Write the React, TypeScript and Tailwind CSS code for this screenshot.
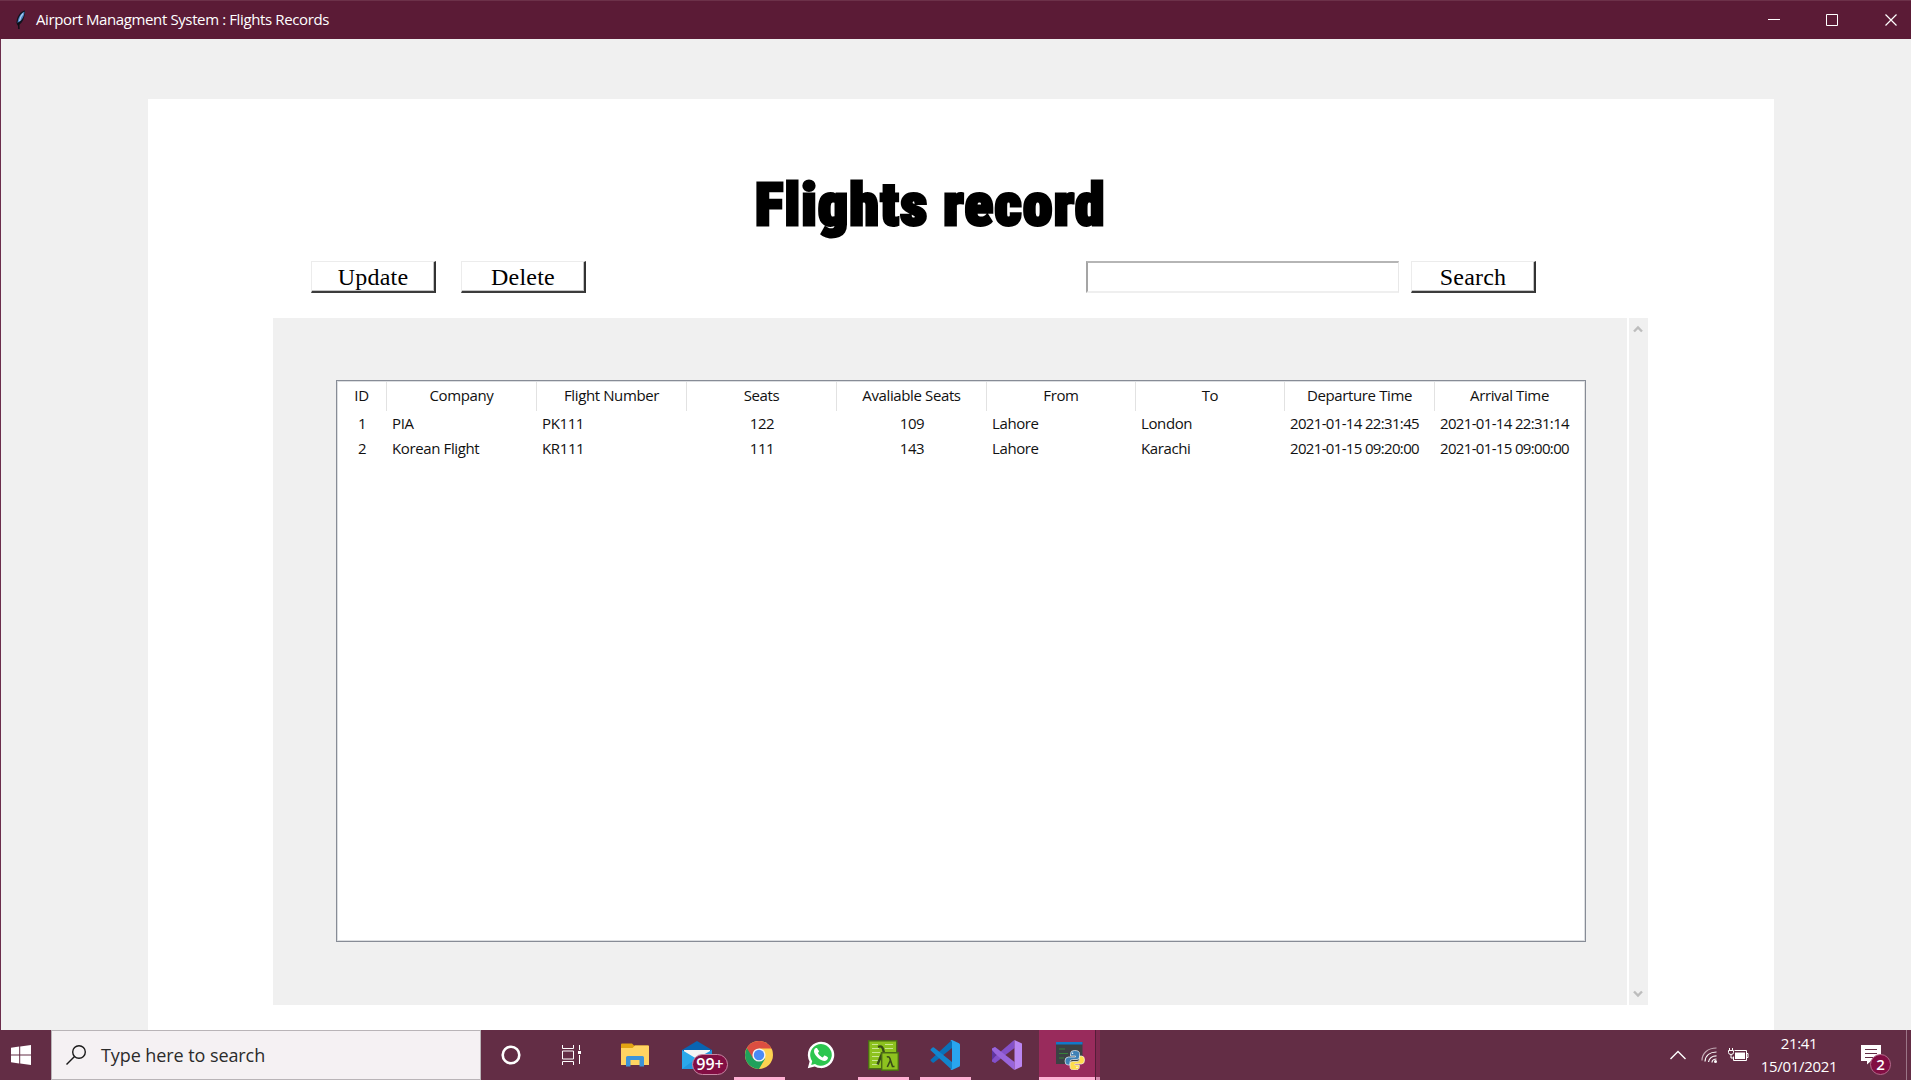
import React from "react";

type Align = "left" | "center";
type Column = { title: string; width: string; align: Align };

const columns: Column[] = [
  { title: "ID", width: "w-[50px]", align: "center" },
  { title: "Company", width: "w-[150px]", align: "left" },
  { title: "Flight Number", width: "w-[150px]", align: "left" },
  { title: "Seats", width: "w-[150px]", align: "center" },
  { title: "Avaliable Seats", width: "w-[150px]", align: "center" },
  { title: "From", width: "w-[149px]", align: "left" },
  { title: "To", width: "w-[149px]", align: "left" },
  { title: "Departure Time", width: "w-[150px]", align: "left" },
  { title: "Arrival Time", width: "w-[150px]", align: "left" },
];

const rows: string[][] = [
  ["1", "PIA", "PK111", "122", "109", "Lahore", "London", "2021-01-14 22:31:45", "2021-01-14 22:31:14"],
  ["2", "Korean Flight", "KR111", "111", "143", "Lahore", "Karachi", "2021-01-15 09:20:00", "2021-01-15 09:00:00"],
];

function TitleBar() {
  return (
    <header className="flex h-[39px] items-center border-t border-[#6c3149] bg-[#5b1b36] text-white">
      <svg className="ml-[14px] h-5 w-3" viewBox="0 0 12 20">
        <path d="M11 .5C6 1.500 2.500 7 2.500 13l1 2.500c4-1 7.500-7 7.500-15z" fill="#10131c" />
        <path d="M10.500 1.500C7 3 4 7.500 3.500 13c3.500-1.500 6.800-6 7-11.500z" fill="#4d84c4" />
        <path d="M9 3.500C7.500 5 6 8 5.500 11" stroke="#a9cdf0" strokeWidth="1.300" fill="none" />
        <path d="M4.600 12.500L4.900 19" stroke="#0c0e15" strokeWidth="1.400" fill="none" />
      </svg>
      <h1 className="ml-[10px] pb-[2px] whitespace-nowrap font-['Open_Sans',sans-serif] text-[15px] tracking-[-0.38px]">
        Airport Managment System : Flights Records
      </h1>
      <svg className="mr-[13px] ml-auto h-3 w-[130px]" viewBox="0 0 130 12" fill="none" stroke="#fff">
        <path d="M0 5.500h12" />
        <path d="M58.500 .5h11v11h-11z" />
        <path d="M117.500 .5l11 11M128.500 .5l-11 11" strokeWidth="1.200" />
      </svg>
    </header>
  );
}

function RaisedButton({ label }: { label: string }) {
  return (
    <button className="flex h-8 w-[125px] items-center justify-center border-t border-r-2 border-b-2 border-l border-t-[#ececec] border-r-[#333] border-b-[#3c3c3c] border-l-[#ececec] bg-white font-['Liberation_Serif',serif] text-2xl leading-none tracking-[0.2px] text-black shadow-[inset_-1px_-1px_0_#c4c4c4]">
      {label}
    </button>
  );
}

function FlightsTable() {
  return (
    <div className="h-[562px] w-[1250px] border border-[#878c96] bg-white font-['Open_Sans',sans-serif] text-[15px] text-[#111] shadow-[inset_0_0_0_1px_#dcdee1]">
      <div className="flex h-[30px] pt-px">
        {columns.map((c) => (
          <div key={c.title} className={`${c.width} flex items-center justify-center border-r border-[#e2e2e2] pb-[2px] tracking-[-0.38px] whitespace-nowrap`}>
            {c.title}
          </div>
        ))}
      </div>
      {rows.map((row) => (
        <div key={row[0]} className="flex h-[25px]">
          {row.map((cell, i) => (
            <div
              key={columns[i].title}
              className={`${columns[i].width} flex items-center whitespace-nowrap ${
                columns[i].align === "center" ? "justify-center" : "pl-[5px]"
              } ${i > 6 ? "tracking-[-0.66px]" : "tracking-[-0.38px]"}`}
            >
              {cell}
            </div>
          ))}
        </div>
      ))}
    </div>
  );
}

function ScrollBar() {
  return (
    <div className="flex w-[21px] flex-col items-center justify-between border-l-2 border-white bg-[#f0f0f0] py-[7px] pr-[2px]">
      <svg className="h-[8px] w-[10px]" viewBox="0 0 10 8" fill="none" stroke="#bdbdbd" strokeWidth="2.400">
        <path d="M1 6.500l4-4 4 4" />
      </svg>
      <svg className="h-[8px] w-[10px]" viewBox="0 0 10 8" fill="none" stroke="#bdbdbd" strokeWidth="2.400">
        <path d="M1 1.500l4 4 4-4" />
      </svg>
    </div>
  );
}

function TaskCell({ children, running }: { children: React.ReactNode; running?: boolean }) {
  return (
    <div className="relative flex h-full w-[62px] shrink-0 items-center justify-center">
      {children}
      {running && <div className="absolute bottom-0 left-[6px] h-[3px] w-[51px] bg-[#ffb1d4]" />}
    </div>
  );
}

function Taskbar() {
  return (
    <footer className="flex h-[50px] items-center bg-[#632d45] text-white">
      <div className="flex w-[51px] items-center pl-[11px]">
        <svg className="h-5 w-5" viewBox="0 0 20 20" fill="#fff">
          <path d="M0 2.800L8.200 1.600V9.500H0zM9.200 1.450L20 0V9.500H9.200zM0 10.500h8.200v7.900L0 17.300zM9.200 10.500H20V20L9.200 18.600z" />
        </svg>
      </div>
      <div className="flex h-full w-[430px] items-center border border-[#b9b4b7] bg-[#f5f1f3] pl-[14px]">
        <svg className="h-5 w-5" viewBox="0 0 20 20" fill="none" stroke="#1a1a1a" strokeWidth="1.400">
          <circle cx="13" cy="7" r="6.300" />
          <path d="M8.500 11.500L.5 19.500" />
        </svg>
        <span className="ml-[15px] whitespace-nowrap font-['Open_Sans',sans-serif] text-[18px] tracking-[-0.08px] text-[#2b2b2b]">
          Type here to search
        </span>
      </div>
      <div className="-ml-px flex h-full">
        <TaskCell>
          <svg className="h-5 w-5" viewBox="0 0 20 20" fill="none" stroke="#fff" strokeWidth="2.600">
            <circle cx="10" cy="10" r="8.300" />
          </svg>
        </TaskCell>
        <TaskCell>
          <svg className="mr-1 h-5 w-[21px]" viewBox="0 0 21 20" fill="none" stroke="#fff">
            <path d="M1.500 0v3.500h11V0M1.500 20v-3.500h11V20M1.500 6h11v8h-11zM18.500 0v5M18.500 10v9" />
            <path d="M17 6h3v3h-3z" fill="#fff" stroke="none" />
          </svg>
        </TaskCell>
        <TaskCell>
          <svg className="h-6 w-7" viewBox="0 0 28 24">
            <path d="M0 1.500Q0 .5 1 .5h10l2 2h14q1 0 1 1V22H0z" fill="#e2a313" />
            <path d="M0 5h11.500l2.500-2.500h13q1 0 1 1V22H0z" fill="#ffd462" />
            <path d="M5 23.500v-9q0-1.500 1.500-1.500h15q1.500 0 1.500 1.500v9h-4.500V17h-9v6.500z" fill="#3d94d8" />
          </svg>
        </TaskCell>
        <TaskCell>
          <svg className="h-7 w-[30px]" viewBox="0 0 30 28">
            <path d="M0 9L15 0l15 9v5H0z" fill="#0864b2" />
            <path d="M2 9h26v10H2z" fill="#f4f4f4" />
            <path d="M0 9l15 9 15-9v19H0z" fill="#2aa8ea" />
            <path d="M0 28l15-11 15-8v19z" fill="#1b86d3" opacity=".55" />
          </svg>
          <span className="absolute top-6 left-[26px] flex h-[21px] w-9 items-center justify-center rounded-full border border-[#c887a4] bg-[#820e43] pb-px font-['Open_Sans',sans-serif] text-[16px] leading-none font-semibold">
            99+
          </span>
        </TaskCell>
        <TaskCell running>
          <svg className="h-7 w-7" viewBox="0 0 28 28">
            <circle cx="14" cy="14" r="14" fill="#fdd250" />
            <path d="M14 14L1.900 7A14 14 0 0 0 14 28l6.200-10.500z" fill="#20a15b" />
            <path d="M14 7.500h12.400A14 14 0 0 0 1.900 7l6.200 10.500z" fill="#dc4e41" />
            <circle cx="14" cy="14" r="6.600" fill="#f4f4f4" />
            <circle cx="14" cy="14" r="5.200" fill="#4a8af4" />
          </svg>
        </TaskCell>
        <TaskCell>
          <svg className="h-7 w-7" viewBox="0 0 28 28">
            <path d="M.8 27.300L2.600 20.500A13.200 13.200 0 1 1 7.700 25.500z" fill="#fff" />
            <path d="M4.200 23.900l1-3.700A10.800 10.800 0 1 1 8 22.900z" fill="#2cc64f" />
            <path d="M10.400 7.700c-.3-.7-.6-.7-1.200-.7-.8 0-2.200 1.100-2.200 3.300 0 3.400 5.600 9.600 10.200 9.600 2.100 0 3.700-1.300 3.800-3.200 0-.6-3-2.200-3.500-2.200s-1.300 1.900-1.800 1.900c-.9 0-4.700-3.100-4.700-4.400 0-.4 1-1 1-1.700 0-.5-1.100-1.800-1.600-2.600z" fill="#fff" />
          </svg>
        </TaskCell>
        <TaskCell running>
          <svg className="mt-px h-[31px] w-[31px]" viewBox="0 0 31 31" fill="none">
            <path d="M.7.700h28v28H.7z" fill="#8dc21f" stroke="#4b6a17" strokeWidth="1.400" />
            <path d="M4 4.500h6M17 4.500h8M4 8.500h7M17 8.500h8M4 12.500h8M4 16.500h7M4 20.500h6M4 24.500h6" stroke="#c9e78f" strokeWidth="1.200" />
            <path d="M10 6.800q4-1.500 5 2.200L16 13M14.500 12.500L9.500 24.500" stroke="#384b18" strokeWidth="2.400" />
            <path d="M13.700 12.700h16.600v17.600H13.700z" fill="#8dc21f" stroke="#4b6a17" strokeWidth="1.400" />
            <path d="M18.800 17q2.300-.8 3 1.200L24.500 26.500H26.500M22.300 20.500L19.300 27" stroke="#384b18" strokeWidth="1.600" />
          </svg>
        </TaskCell>
        <TaskCell running>
          <svg className="h-[30px] w-[30px]" viewBox="0 0 30 30">
            <path d="M.8 19.500L22 0v8L4 22.500q-1 .6-1.800-.2l-1.500-1.500q-.6-.7.1-1.300z" fill="#0a70b8" />
            <path d="M.8 10.500L22 30v-8L4 7.500q-1-.6-1.800.2L.7 9.200q-.6.700.1 1.300z" fill="#1285cd" />
            <path d="M22 0l7 3.300q1 .5 1 1.500v20.400q0 1-1 1.500L22 30q-1.200 0-1.800-.8 1.800.5 1.800-1.500V2.300Q22 .3 20.200.8 20.800 0 22 0z" fill="#29a5ef" />
          </svg>
        </TaskCell>
        <TaskCell>
          <svg className="h-[30px] w-[30px]" viewBox="0 0 30 30">
            <path d="M0 8.500L3 7l5 3.500L3.500 15 8 19.500 3 23l-3-1.500z" fill="#5f359f" />
            <path d="M0 21.500V20L3.500 16 21 1l1.500-1v8L3 23z" fill="#8450c8" />
            <path d="M0 8.500L3 7l19.500 15v8L21 29 3.500 14 0 10z" fill="#9965db" />
            <path d="M22.500 0L30 3.500v23L22.500 30z" fill="#ba86f2" />
          </svg>
        </TaskCell>
        <div className="relative ml-px flex h-full w-[61px] items-center bg-[#992b5c] pl-[17px] shadow-[inset_-4px_0_0_#7f2950,inset_-5px_0_0_#551d38]">
          <svg className="mt-px h-7 w-[29px]" viewBox="0 0 29 28">
            <path d="M0 0h26.500v22H0z" fill="#3c4144" />
            <path d="M0 0h26.500v2.500H0z" fill="#1278c7" />
            <path d="M3 7h6M3 11.500h9M3 16h5" stroke="#38813a" strokeWidth="1.200" />
            <path d="M18.500 8.500q-4 0-4 3V14h5v1h-7q-3.500 0-3.500 4t3 4h2v-3q0-2.500 2.500-2.500h4.500q2.500 0 2.500-2.500v-3.500q0-3-5-3z" fill="#3f81b6" stroke="#f1f1f1" strokeWidth=".7" />
            <path d="M18.800 28q4.500 0 4.500-3v-2h-4.500v-1h6.700q3 0 3-4t-3-4h-2v3q0 2.500-2.500 2.500h-4.500q-2.500 0-2.500 2.500v3q0 3 4.800 3z" fill="#ffdc4b" stroke="#f1f1f1" strokeWidth=".7" />
            <circle cx="16.500" cy="11.300" r=".8" fill="#fff" />
            <circle cx="21" cy="25.200" r=".8" fill="#fff" />
          </svg>
          <div className="absolute bottom-0 left-0 h-[3px] w-14 bg-[#ffb1d4]" />
          <div className="absolute right-0 bottom-0 h-[3px] w-1 bg-[#d48cae]" />
        </div>
      </div>
      <div className="ml-auto flex h-full items-center">
        <svg className="h-[10px] w-4" viewBox="0 0 16 10" fill="none" stroke="#fff" strokeWidth="1.400">
          <path d="M.5 9L8 1.500 15.500 9" />
        </svg>
        <svg className="ml-[15px] h-4 w-4" viewBox="0 0 16 16" fill="none" stroke="#e4d6dc" strokeWidth="1.200">
          <path d="M1 13.500C1 6 7 1 15.500 1" opacity=".75" />
          <path d="M4 14.500C4.500 8.500 9 5 15.500 5M7.500 15C8 11 11.500 8.800 15.500 8.800M11 15.500c0-2 2-3.500 4.500-3.500" stroke="#fff" />
          <circle cx="14.500" cy="14.500" r="1.500" fill="#fff" stroke="none" />
        </svg>
        <svg className="ml-[11px] h-[14px] w-[21px]" viewBox="0 0 21 14" fill="none" stroke="#fff">
          <path d="M6.500 2.500h12v10h-13v-4M18.500 5.500h1.500v4h-1.500M1.500 0v2.500M4.500 0v2.500M.5 2.500h5v2q0 2-2.500 2t-2.500-2zM3 6.500V10h2" />
          <path d="M7 4.500h10v6.500H7z" fill="#fff" stroke="none" />
        </svg>
        <div className="ml-3 flex w-[76px] flex-col items-center font-['Open_Sans',sans-serif] text-[15px] leading-[23px] tracking-[-0.3px]">
          <span>21:41</span>
          <span>15/01/2021</span>
        </div>
        <div className="relative ml-6 h-5 w-5">
          <svg className="h-5 w-5" viewBox="0 0 20 20">
            <path d="M0 0h20v16H10l-4 3.500V16H0z" fill="#fff" />
            <path d="M4 4.500h12M4 8.500h12M4 12.500h8" stroke="#632d45" />
          </svg>
          <span className="absolute top-[9px] left-[9px] flex h-[21px] w-[21px] items-center justify-center rounded-full border border-[#b56a8c] bg-[#820e43] font-['Open_Sans',sans-serif] text-[15px] leading-none font-semibold">
            2
          </span>
        </div>
        <div className="ml-[25px] h-full w-[5px] border-l border-[#9b7687]" />
      </div>
    </footer>
  );
}

export default function App() {
  return (
    <div className="flex h-[1080px] w-[1911px] flex-col overflow-hidden bg-[#f0f0f0]">
      <TitleBar />
      <main className="flex flex-1 flex-col border-l border-[#6b2c4b] pt-[60px]">
        <section className="ml-[147px] w-[1626px] flex-1 bg-white">
          <div className="flex h-[162px] items-center pt-[49px] pl-[607px]">
            <h2 className="origin-left scale-x-[0.99] font-['Roboto',sans-serif] text-[60px] leading-none font-black tracking-[1.3px] whitespace-nowrap text-black [-webkit-text-stroke:3px_black] [font-stretch:75%]">
              Flights record
            </h2>
          </div>
          <div className="flex h-8 pl-[163px]">
            <RaisedButton label="Update" />
            <div className="w-[25px]" />
            <RaisedButton label="Delete" />
            <input className="ml-[500px] h-8 w-[313px] border-t-2 border-r border-b-2 border-l-2 border-t-[#b5b5b5] border-r-[#e8e8e8] border-b-[#efefef] border-l-[#a5a5a5] bg-white outline-none" />
            <div className="w-3" />
            <RaisedButton label="Search" />
          </div>
          <div className="mt-[25px] ml-[125px] flex h-[687px] w-[1375px]">
            <div className="w-[1354px] bg-[#f0f0f0] pt-[62px] pl-[63px]">
              <FlightsTable />
            </div>
            <ScrollBar />
          </div>
        </section>
      </main>
      <Taskbar />
    </div>
  );
}
